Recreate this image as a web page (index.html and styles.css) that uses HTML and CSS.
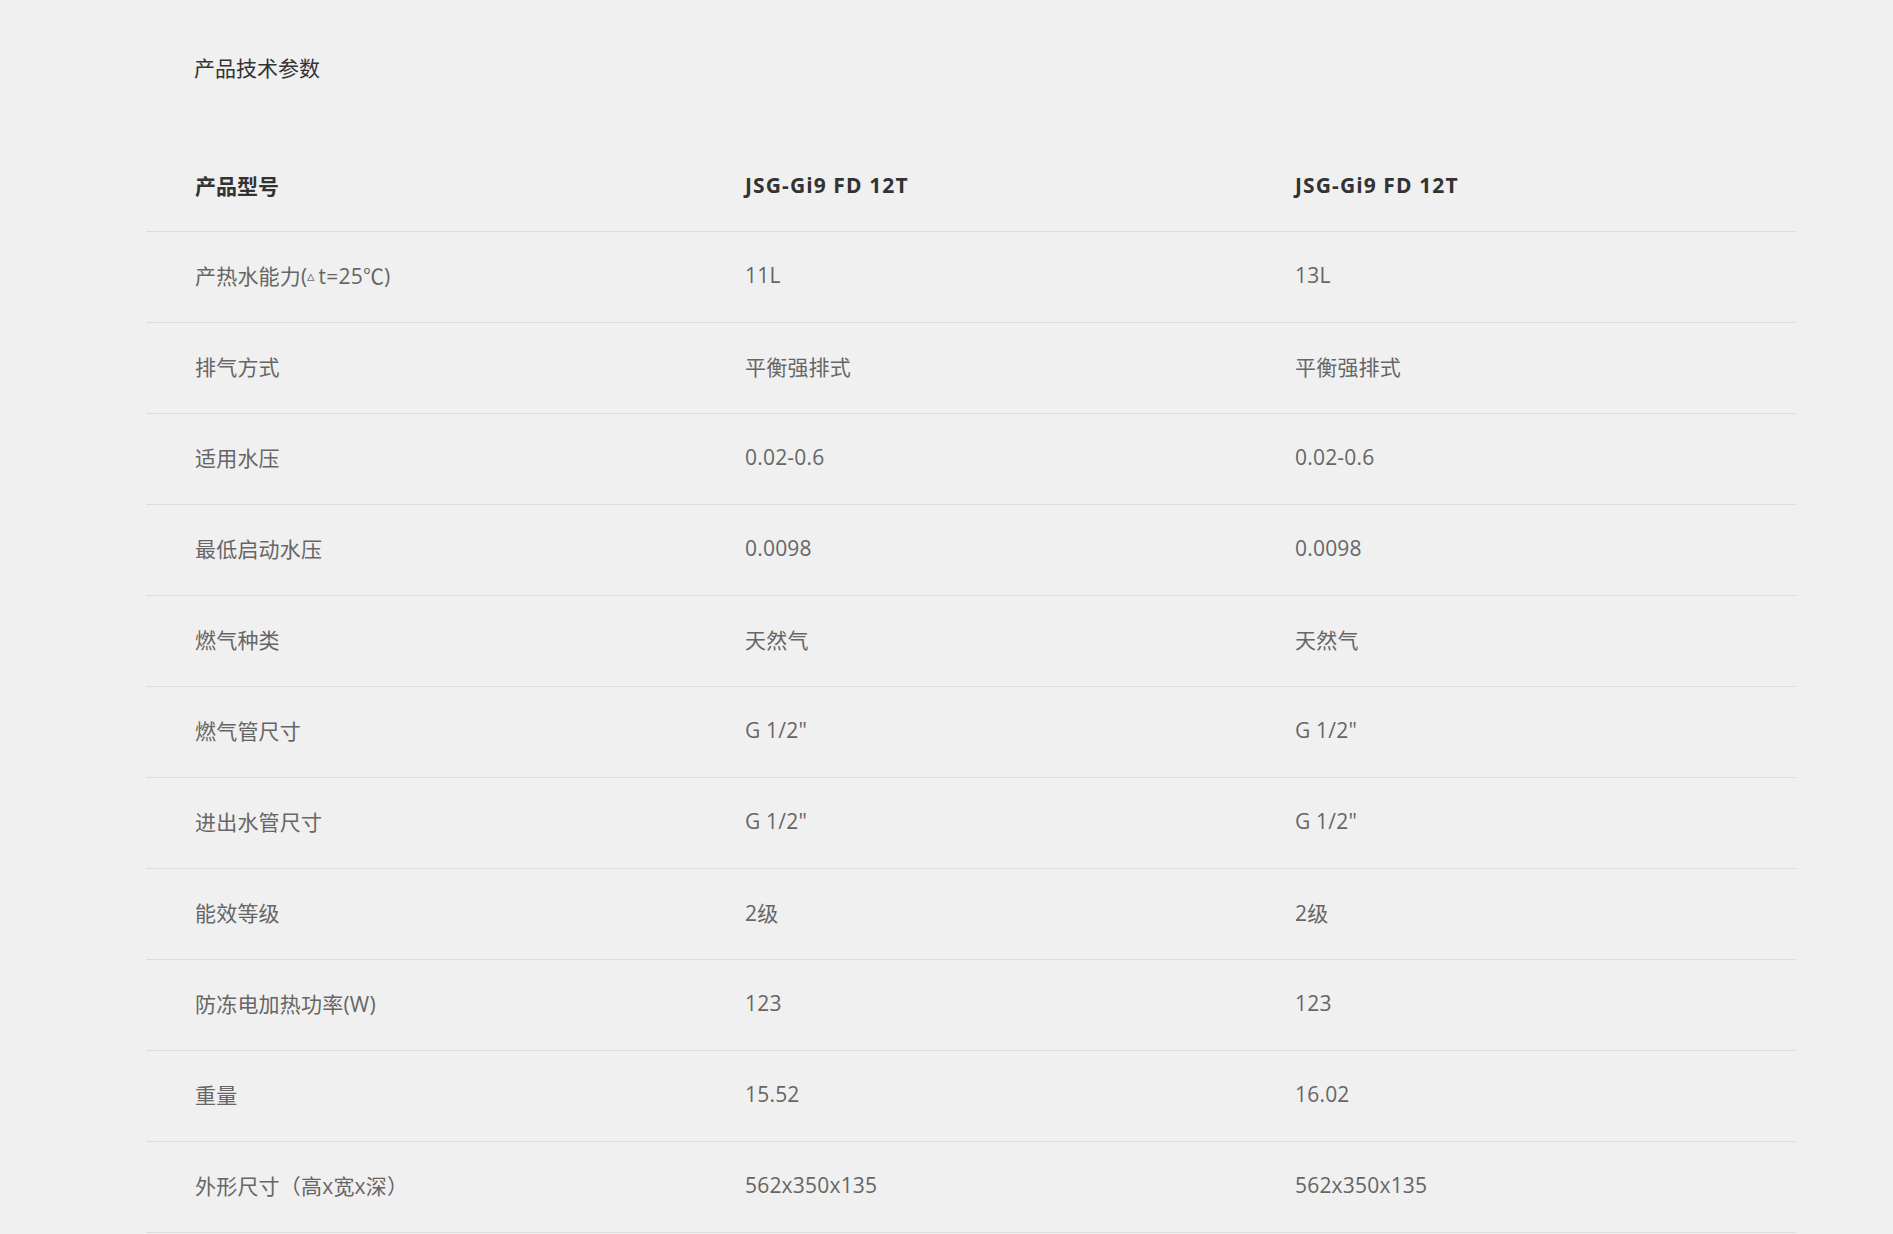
FILE: index.html
```html
<!DOCTYPE html>
<html lang="zh-CN">
<head>
<meta charset="utf-8">
<title>产品技术参数</title>
<link rel="stylesheet" href="styles.css">
</head>
<body>
<div class="wrap">
  <h2 class="title">产品技术参数</h2>
  <table class="spec">
    <thead>
      <tr><th>产品型号</th><th class="model">JSG-Gi9 FD 12T</th><th class="model">JSG-Gi9 FD 12T</th></tr>
    </thead>
    <tbody>
      <tr><td>产热水能力(<span class="tri">▵</span>t=25℃)</td><td>11L</td><td>13L</td></tr>
      <tr><td>排气方式</td><td>平衡强排式</td><td>平衡强排式</td></tr>
      <tr><td>适用水压</td><td>0.02-0.6</td><td>0.02-0.6</td></tr>
      <tr><td>最低启动水压</td><td>0.0098</td><td>0.0098</td></tr>
      <tr><td>燃气种类</td><td>天然气</td><td>天然气</td></tr>
      <tr><td>燃气管尺寸</td><td>G 1/2"</td><td>G 1/2"</td></tr>
      <tr><td>进出水管尺寸</td><td>G 1/2"</td><td>G 1/2"</td></tr>
      <tr><td>能效等级</td><td>2级</td><td>2级</td></tr>
      <tr><td>防冻电加热功率(W)</td><td>123</td><td>123</td></tr>
      <tr><td>重量</td><td>15.52</td><td>16.02</td></tr>
      <tr><td>外形尺寸（高x宽x深）</td><td>562x350x135</td><td>562x350x135</td></tr>
    </tbody>
  </table>
</div>
</body>
</html>
```
FILE: styles.css
```css
html, body {
  margin: 0;
  padding: 0;
  background: #f0f0f0;
}
body {
  font-family: "Open Sans", "Noto Sans CJK SC", sans-serif;
  color: #666;
  overflow: hidden;
}
.wrap {
  width: 1650px;
  margin-left: 146px;
}
.title {
  margin: 53px 0 0 0;
  padding-left: 48px;
  font-size: 21px;
  line-height: 30px;
  font-weight: 400;
  color: #333;
}
.spec {
  margin-top: 57px;
  width: 1650px;
  border-collapse: collapse;
  table-layout: fixed;
}
.spec th,
.spec td {
  width: 550px;
  height: 91px;
  padding: 0 0 0 49px;
  box-sizing: border-box;
  text-align: left;
  vertical-align: middle;
  font-size: 21px;
  border-bottom: 1px solid #dcdcdc;
}
.spec th {
  font-weight: 700;
  color: #333;
}
.spec th.model {
  letter-spacing: 1.1px;
}
.spec td {
  font-weight: 400;
  color: #666;
  letter-spacing: 0.2px;
  padding-bottom: 3px;
}
.tri {
  font-size: 15px;
  vertical-align: 3px;
  margin-right: 3px;
}
```
